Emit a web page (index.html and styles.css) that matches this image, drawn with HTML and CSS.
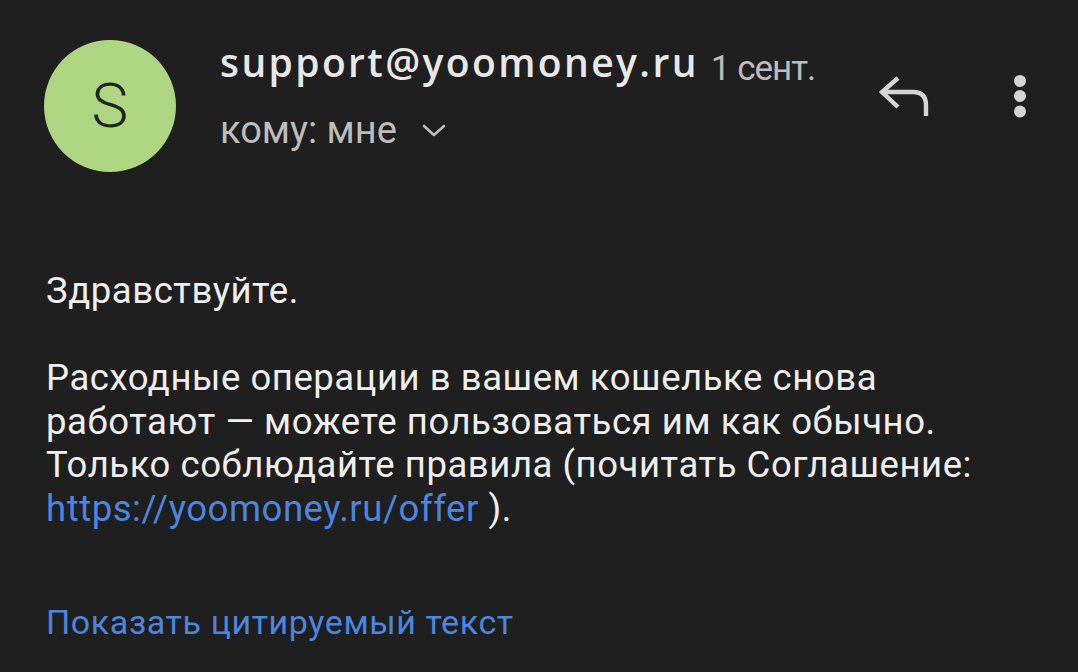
FILE: index.html
```html
<!DOCTYPE html>
<html lang="ru">
<head>
<meta charset="utf-8">
<link rel="stylesheet" href="styles.css">
</head>
<body>
<div class="page">
  <header class="head">
    <div class="avatar">S</div>
    <div class="meta">
      <div class="from-row">
        <span class="from">support@yoomoney.ru</span>
        <span class="date">1 сент.</span>
      </div>
      <div class="to-row">
        <span class="to">кому: мне</span>
        <svg class="chev" width="24" height="14" viewBox="0 0 24 14"><path d="M2 2 L12 11 L22 2" fill="none" stroke="#bdbdbd" stroke-width="2.6" stroke-linecap="round" stroke-linejoin="round"/></svg>
      </div>
    </div>
    <div class="actions">
      <svg class="reply" width="56" height="44" viewBox="0 0 56 44"><path d="M22 4 L6 18 L22 33" fill="none" stroke="#d4d4d4" stroke-width="4.4" stroke-linecap="butt" stroke-linejoin="miter"/><path d="M7 18 H37 Q50 18 50 31 V42" fill="none" stroke="#d4d4d4" stroke-width="4.4"/></svg>
      <svg class="more" width="14" height="46" viewBox="0 0 14 46"><circle cx="7" cy="7" r="6" fill="#d4d4d4"/><circle cx="7" cy="22" r="6" fill="#d4d4d4"/><circle cx="7" cy="37.5" r="6" fill="#d4d4d4"/></svg>
    </div>
  </header>
  <main class="body">
    <p>Здравствуйте.</p>
    <p>Расходные операции в вашем кошельке снова<br>работают — можете пользоваться им как обычно.<br>Только соблюдайте правила (почитать Соглашение:<br><a class="link" href="#">https://yoomoney.ru/offer</a> ).</p>
    <p class="quoted"><a class="link" href="#">Показать цитируемый текст</a></p>
  </main>
</div>
</body>
</html>
```
FILE: styles.css
```css
html, body {
  margin: 0;
  padding: 0;
  background: #1f1f1f;
  width: 1078px;
  height: 672px;
  overflow: hidden;
}
.page {
  font-family: Roboto, "Liberation Sans", sans-serif;
  color: #efefef;
}
.head {
  display: flex;
  align-items: flex-start;
  padding: 40px 0 0 44px;
}
.avatar {
  width: 132px;
  height: 132px;
  border-radius: 50%;
  background: #aed581;
  color: #1b2813;
  font-size: 62px;
  font-weight: 300;
  line-height: 1;
  display: flex;
  align-items: center;
  justify-content: center;
  flex-shrink: 0;
}
.meta {
  margin-left: 44px;
  display: flex;
  flex-direction: column;
}
.from-row {
  height: 44px;
  line-height: 44px;
  white-space: nowrap;
}
.from {
  font-family: "Open Sans", sans-serif;
  font-size: 39px;
  font-weight: 550;
  color: #e8e8e8;
  letter-spacing: 2.4px;
}
.date {
  font-size: 35px;
  color: #bdbdbd;
  letter-spacing: -1px;
  margin-left: 8px;
  vertical-align: -3px;
}
.to-row {
  display: flex;
  align-items: center;
  gap: 25px;
  margin-top: 24px;
  height: 44px;
}
.to {
  font-size: 38px;
  line-height: 44px;
  color: #bdbdbd;
}
.chev {
  display: block;
  margin-top: 2px;
}
.actions {
  margin-left: auto;
  margin-right: 51px;
  display: flex;
  align-items: flex-start;
  gap: 81px;
  margin-top: 34px;
}
.reply, .more {
  display: block;
}
.body {
  padding: 97px 0 0 46px;
  font-size: 36.5px;
  letter-spacing: 0.55px;
  line-height: 43.5px;
}
.body p {
  margin: 0 0 43.5px 0;
}
.link {
  color: #4c86df;
  text-decoration: none;
}
.body p.quoted {
  margin-top: 71px;
  font-size: 34px;
  letter-spacing: 0.6px;
}
```
